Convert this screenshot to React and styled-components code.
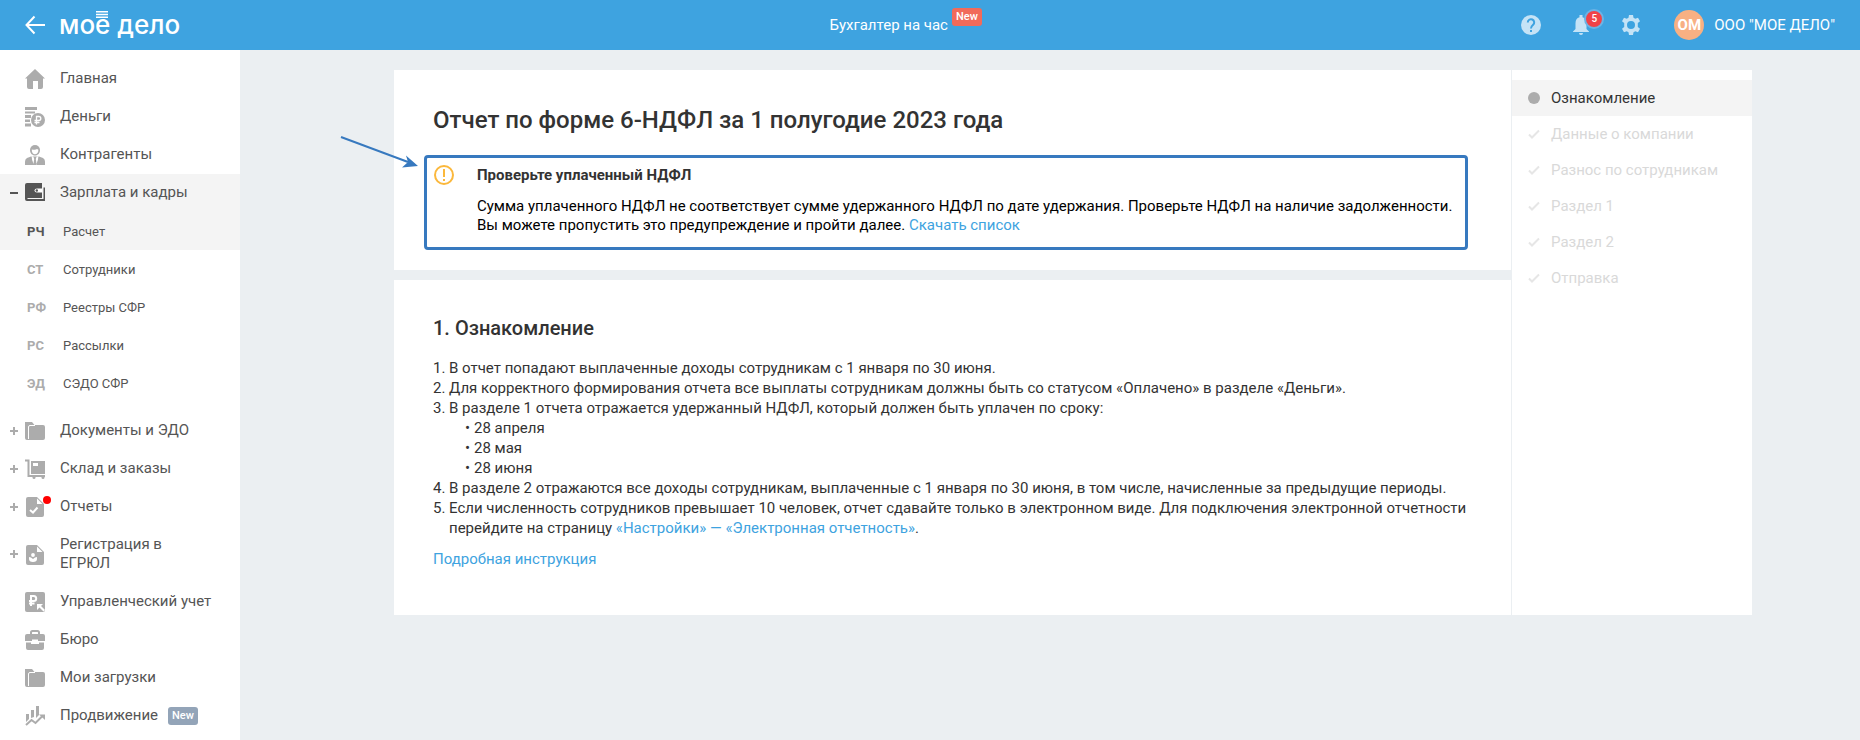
import React from 'react';
import styled, { createGlobalStyle, css } from 'styled-components';

const GlobalStyle = createGlobalStyle`
  * { box-sizing: border-box; }
  body {
    margin: 0;
    background: #ebeff2;
    color: #333;
    font: 400 15px/20px Roboto, "Open Sans", "Liberation Sans", sans-serif;
  }
  button { font: inherit; color: inherit; border: 0; padding: 0; background: none; cursor: pointer; }
  h1, h2, h3, p, ul, ol { margin: 0; padding: 0; font: inherit; }
  ul, ol { list-style: none; }
`;

const Page = styled.div`
  min-height: 100vh;
  display: grid;
  grid-template: 50px 1fr / 240px 1fr;
`;

const Header = styled.header`
  grid-column: 1 / -1;
  display: grid;
  grid-template-columns: 240px 1fr auto;
  align-items: center;
  padding-right: 25px;
  background: #3ea3e0;
  color: #fff;
`;

const Brand = styled.div`
  display: flex;
  align-items: center;
  gap: 14px;
  padding-left: 25px;
`;

const BackButton = styled.button`
  display: flex;
`;

const Logo = styled.a`
  display: flex;
  position: relative;
  color: #fff;
  text-decoration: none;
  white-space: nowrap;
  font: 500 26px/32px Inter, "Open Sans", sans-serif;
`;

const LogoBars = styled.svg`
  position: absolute;
  left: 37px;
  top: 2px;
`;

const HeaderNav = styled.nav`
  display: flex;
  justify-content: center;
  gap: 4px;
  padding-left: 50px;
`;

const HeaderLink = styled.a`
  color: #fff;
  text-decoration: none;
`;

const Tag = styled.span`
  height: 18px;
  padding: 0 4px;
  border-radius: 3px;
  background: ${p => p.$color};
  color: #fff;
  font: 500 11px/17px Roboto, sans-serif;
`;

const RaisedTag = styled(Tag)`
  align-self: flex-start;
  margin-top: -7px;
`;

const Tools = styled.div`
  display: flex;
  align-items: center;
  gap: 30px;
`;

const ToolButton = styled.button`
  position: relative;
  display: flex;
  color: #c5e3f6;
`;

const Counter = styled.span`
  position: absolute;
  left: 13px;
  top: -6px;
  width: 20px;
  height: 20px;
  border: 2px solid #6cb3e5;
  border-radius: 50%;
  background: #f04248;
  color: #fff;
  font: 500 10px/16px Roboto, sans-serif;
  text-align: center;
`;

const Account = styled.button`
  display: flex;
  align-items: center;
  gap: 10px;
  margin-left: 3px;
  color: #fff;
`;

const Avatar = styled.span`
  width: 30px;
  height: 30px;
  border-radius: 50%;
  background: #f8b083;
  font-weight: 700;
  line-height: 30px;
  text-align: center;
`;

const Sidebar = styled.nav`
  padding: 10px 0 6px;
  background: #fff;
  color: #555;
`;

const rowStyle = css`
  display: flex;
  align-items: center;
  width: 100%;
  min-height: 38px;
  color: inherit;
  text-decoration: none;
  background: ${p => (p.$active ? '#f4f4f4' : 'transparent')};
`;

const MenuRow = styled.a`
  ${rowStyle}
  padding: 9px 25px 10px 9px;
  line-height: 19px;
`;

const Toggle = styled.span`
  width: 16px;
  display: flex;
  color: ${p => (p.$active ? '#555' : '#acacac')};
`;

const IconBox = styled.span`
  position: relative;
  display: flex;
  height: 19px;
  margin-right: 15px;
  color: ${p => (p.$active ? '#555' : '#acacac')};
`;

const AlertDot = styled.span`
  position: absolute;
  left: 18px;
  top: -1px;
  width: 8px;
  height: 8px;
  border-radius: 50%;
  background: #f00;
`;

const MenuTag = styled(Tag)`
  margin-left: 10px;
`;

const SubMenu = styled.ul`
  margin-bottom: 10px;
`;

const SubRow = styled.a`
  ${rowStyle}
  padding: 2px 0 0 27px;
  font-size: 13px;
`;

const Code = styled.span`
  width: 36px;
  font-weight: 700;
  color: ${p => (p.$active ? '#555' : '#acacac')};
`;

const Main = styled.main`
  padding: 20px 0 20px 46px;
`;

const Report = styled.div`
  display: grid;
  grid-template-columns: 1fr 241px;
  width: calc(100% - 40px);
  max-width: 1358px;
  margin: 0 auto;
`;

const Panels = styled.div`
  display: flex;
  flex-direction: column;
  gap: 10px;
`;

const Panel = styled.section`
  position: relative;
  padding: ${p => p.$padding};
  background: #fff;
`;

const Title = styled.h1`
  margin-bottom: 20px;
  font-size: 24px;
  font-weight: 500;
  line-height: 30px;
`;

const Notice = styled.section`
  display: flex;
  gap: 23px;
  margin: 0 3px 0 -9px;
  padding: 7px 7px 12px;
  border: 3px solid #3779bf;
  border-radius: 4px;
  color: #000;
  line-height: 19px;
`;

const NoticeIcon = styled.svg`
  flex: none;
  color: #fbb83c;
`;

const NoticeTitle = styled.h3`
  margin-bottom: 12px;
  color: #333;
  font-weight: 700;
  line-height: 20px;
`;

const Pointer = styled.svg`
  position: absolute;
  left: -54px;
  top: 66px;
`;

const Link = styled.a`
  color: #3ea3e0;
  text-decoration: none;
`;

const Heading = styled.h2`
  margin-bottom: 17px;
  font-size: 20px;
  font-weight: 500;
  line-height: 25px;
`;

const Notes = styled.ol`
  margin-bottom: 11px;
`;

const Note = styled.li`
  display: flex;
`;

const Marker = styled.span`
  flex: 0 0 ${p => p.$width};
`;

const Dates = styled.ul`
  padding-left: 16px;
`;

const Steps = styled.ol`
  padding-top: 10px;
  border-left: 1px solid #ebeff2;
  background: #fff;
`;

const Step = styled.li`
  display: flex;
  align-items: center;
  gap: 11px;
  height: 36px;
  padding: 0 16px;
  background: ${p => (p.$active ? '#f4f4f4' : 'transparent')};
  color: ${p => (p.$active ? '#333' : '#d9d9d9')};
`;

const StepDot = styled.span`
  width: 12px;
  height: 12px;
  border-radius: 50%;
  background: #acacac;
`;

const Svg = ({ children, size = 20 }) => (
  <svg width={size} height={size} viewBox={`0 0 ${size} ${size}`} fill="currentColor" aria-hidden="true">
    {children}
  </svg>
);

const icons = {
  home: <path d="M10 0 20 9.500H18V18q0 2-2 2H13V12H8v8H4q-2 0-2-2V9.500H0Z" />,
  money: (
    <>
      <path d="M0 0h12v3H0zM0 4.500h10v2H0zM0 8h6v3H0zM0 12.500h5v2.500H0zM0 16.500h6v3H0z" />
      <circle cx="13" cy="13" r="7" />
      <path d="M11.500 17.500v-8h2.300a2 2 0 0 1 0 4H9.500M9.500 15.500h5" fill="none" stroke="#fff" strokeWidth="1.300" />
    </>
  ),
  person: (
    <>
      <path d="M10 0a5 5 0 0 1 5 5c0 3-2 5.500-5 5.500S5 8 5 5a5 5 0 0 1 5-5Z" />
      <path d="M6.800 4.500q4 .8 5.200-.5l1.400.7C13.400 7.500 12 9.200 10 9.200S6.600 7.500 6.800 4.500Z" fill="#fff" />
      <path d="M6 11.500 2 13q-2 1-2 3.500V20h20v-3.500q0-2.500-2-3.500l-4-1.500Z" />
      <path d="m6.500 11 3.500 1.500 3.500-1.500-1 9h-5Z" fill="#fff" />
      <path d="M8.500 12h3l-.7 2 .9 6H8.300l.9-6ZM6 11.500 8.800 20H5ZM14 11.500 11.200 20H15Z" />
    </>
  ),
  wallet: (
    <>
      <path d="M2 0h15v15H2.500v1H18.500V4.500H20V18H2q-2 0-2-2V2q0-2 2-2Z" />
      <path d="M17 5.500h-5q-2.500 0-2.500 2t2.500 2h5Z" fill="#fff" />
      <circle cx="11.800" cy="7.500" r="1.200" />
    </>
  ),
  folder: (
    <>
      <path d="M0 1h7l2.500 3H18q2 0 2 2v11q0 2-2 2H2q-2 0-2-2Z" />
      <path d="M3.500 18V6q0-1.500 1.500-1.500h5" fill="none" stroke="#fff" />
    </>
  ),
  cart: (
    <>
      <path d="M0 1.500h3.500V17H20" fill="none" stroke="currentColor" strokeWidth="2" />
      <path d="M6 2h14v13H6Z" />
      <path d="M8 4h5v3H8Z" fill="#fff" />
      <circle cx="9" cy="18.500" r="1.500" />
      <circle cx="18" cy="18.500" r="1.500" />
    </>
  ),
  report: (
    <>
      <path d="M3 0h9l7 7v11q0 2-2 2H3q-2 0-2-2V2q0-2 2-2Z" />
      <path d="M12 1.500V7h5.500Z" fill="#fff" />
      <path d="m5 13 3 2.500 4.500-5" fill="none" stroke="#fff" strokeWidth="2" />
    </>
  ),
  registry: (
    <>
      <path d="M3 0h9l7 7v11q0 2-2 2H3q-2 0-2-2V2q0-2 2-2Z" />
      <path d="M12 1.500V7h5.500Z" fill="#fff" />
      <circle cx="8" cy="10" r="1.900" fill="#fff" />
      <path d="M4 12q2 0 4 2 2-2 4-2v2q0 3-4 3t-4-3Z" fill="#fff" />
    </>
  ),
  ruble: (
    <>
      <rect width="20" height="20" rx="2" />
      <path d="M6 14V4h2.700a2.500 2.500 0 0 1 0 5H4M4 11.500h5.500" fill="none" stroke="#fff" strokeWidth="2" />
      <path d="M12 12h6l-2 2 4 4-1.500 1.500-4-4-2.500 2.500Z" fill="#fff" />
    </>
  ),
  briefcase: (
    <>
      <path d="M6 5V2.500Q6 1 7.500 1h5Q14 1 14 2.500V5" fill="none" stroke="currentColor" strokeWidth="2" />
      <path d="M2 4h16q2 0 2 2v5h-7V9.500H7V11H0V6q0-2 2-2ZM1 12.500h5V14h8v-1.500h5V18q0 2-2 2H3q-2 0-2-2Z" />
    </>
  ),
  growth: (
    <>
      <path d="M1 8h3v5l-3 3zM6 4h3v7l-3 1zM11 0h3v9l-3 3z" />
      <path d="m1 19 5.500-5 4 3 7-7" fill="none" stroke="currentColor" strokeWidth="2" />
      <path d="M14 8.500h6V14Z" />
    </>
  ),
};

const menu = [
  { icon: 'home', label: 'Главная' },
  { icon: 'money', label: 'Деньги' },
  { icon: 'person', label: 'Контрагенты' },
  {
    icon: 'wallet',
    label: 'Зарплата и кадры',
    active: true,
    toggle: 'minus',
    children: [
      { code: 'РЧ', label: 'Расчет', active: true },
      { code: 'СТ', label: 'Сотрудники' },
      { code: 'РФ', label: 'Реестры СФР' },
      { code: 'РС', label: 'Рассылки' },
      { code: 'ЭД', label: 'СЭДО СФР' },
    ],
  },
  { icon: 'folder', label: 'Документы и ЭДО', toggle: 'plus' },
  { icon: 'cart', label: 'Склад и заказы', toggle: 'plus' },
  { icon: 'report', label: 'Отчеты', toggle: 'plus', alert: true },
  { icon: 'registry', label: 'Регистрация в ЕГРЮЛ', toggle: 'plus' },
  { icon: 'ruble', label: 'Управленческий учет' },
  { icon: 'briefcase', label: 'Бюро' },
  { icon: 'folder', label: 'Мои загрузки' },
  { icon: 'growth', label: 'Продвижение', tag: 'New' },
];

const steps = ['Ознакомление', 'Данные о компании', 'Разнос по сотрудникам', 'Раздел 1', 'Раздел 2', 'Отправка'];

const notes = [
  'В отчет попадают выплаченные доходы сотрудникам с 1 января по 30 июня.',
  'Для корректного формирования отчета все выплаты сотрудникам должны быть со статусом «Оплачено» в разделе «Деньги».',
  <>
    В разделе 1 отчета отражается удержанный НДФЛ, который должен быть уплачен по сроку:
    <Dates>
      {['28 апреля', '28 мая', '28 июня'].map(d => (
        <Note key={d}>
          <Marker $width="9px">•</Marker>
          {d}
        </Note>
      ))}
    </Dates>
  </>,
  'В разделе 2 отражаются все доходы сотрудникам, выплаченные с 1 января по 30 июня, в том числе, начисленные за предыдущие периоды.',
  <>
    Если численность сотрудников превышает 10 человек, отчет сдавайте только в электронном виде. Для подключения
    электронной отчетности перейдите на страницу <Link href="#settings">«Настройки» — «Электронная отчетность»</Link>.
  </>,
];

function MenuItem({ item }) {
  return (
    <li>
      <MenuRow href="#" $active={item.active}>
        <Toggle $active={item.active}>
          {item.toggle && (
            <Svg size={10}>
              <path d={item.toggle === 'plus' ? 'M1 5h8M5 1v8' : 'M1 5h8'} stroke="currentColor" strokeWidth="2" />
            </Svg>
          )}
        </Toggle>
        <IconBox $active={item.active}>
          <Svg>{icons[item.icon]}</Svg>
          {item.alert && <AlertDot />}
        </IconBox>
        <span>{item.label}</span>
        {item.tag && <MenuTag $color="#93a4b8">{item.tag}</MenuTag>}
      </MenuRow>
      {item.children && (
        <SubMenu>
          {item.children.map(sub => (
            <li key={sub.code}>
              <SubRow href="#" $active={sub.active}>
                <Code $active={sub.active}>{sub.code}</Code>
                {sub.label}
              </SubRow>
            </li>
          ))}
        </SubMenu>
      )}
    </li>
  );
}

export default function App() {
  return (
    <Page>
      <GlobalStyle />
      <Header>
        <Brand>
          <BackButton aria-label="Назад">
            <Svg>
              <path d="M20 10H1.500M9.500 1.500 1.500 10l8 8.500" fill="none" stroke="currentColor" strokeWidth="2" />
            </Svg>
          </BackButton>
          <Logo href="#">
            мое дело
            <LogoBars width="12" height="7" viewBox="0 0 12 7" aria-hidden="true">
              <path d="M0 .7h12M0 3.500h12M0 6.300h12" stroke="#fff" strokeWidth="1.400" />
            </LogoBars>
          </Logo>
        </Brand>
        <HeaderNav>
          <HeaderLink href="#">Бухгалтер на час</HeaderLink>
          <RaisedTag $color="#f16a5a">New</RaisedTag>
        </HeaderNav>
        <Tools>
          <ToolButton aria-label="Помощь">
            <Svg>
              <circle cx="10" cy="10" r="10" />
              <path d="M6.800 7.500a3.200 3.200 0 1 1 5.200 2.400c-1.200 1-2 1.600-2 3.600" fill="none" stroke="#3ea3e0" strokeWidth="2" />
              <path d="M9 15h2v2H9z" fill="#3ea3e0" />
            </Svg>
          </ToolButton>
          <ToolButton aria-label="Уведомления">
            <Svg>
              <path d="M8.500 0h3v2.200q4 1.200 4 6V14l2.500 2.500V17H2v-.5L4.500 14V8.200q0-4.800 4-6ZM8 18h4q0 2-2 2t-2-2Z" />
            </Svg>
            <Counter>5</Counter>
          </ToolButton>
          <ToolButton aria-label="Настройки">
            <Svg>
              <path
                fillRule="evenodd"
                d="M8 0h4l.5 2.800 1.800 1 2.700-1 2 3.400-2.200 1.900v3.800l2.200 1.900-2 3.400-2.700-1-1.800 1L12 20H8l-.5-2.800-1.800-1-2.700 1-2-3.400 2.200-1.900V8.100L1 6.200l2-3.400 2.700 1 1.800-1ZM10 6a4 4 0 1 0 0 8 4 4 0 0 0 0-8Z"
              />
            </Svg>
          </ToolButton>
          <Account>
            <Avatar>ОМ</Avatar>
            ООО "МОЕ ДЕЛО"
          </Account>
        </Tools>
      </Header>

      <Sidebar>
        <ul>
          {menu.map(item => (
            <MenuItem key={item.label} item={item} />
          ))}
        </ul>
      </Sidebar>

      <Main>
        <Report>
          <Panels>
            <Panel $padding="35px 40px 20px 39px">
              <Title>Отчет по форме 6-НДФЛ за 1 полугодие 2023 года</Title>
              <Notice>
                <NoticeIcon width="20" height="20" viewBox="0 0 20 20" fill="currentColor" aria-hidden="true">
                  <circle cx="10" cy="10" r="9" fill="none" stroke="currentColor" strokeWidth="2" />
                  <path d="M9 4h2v8H9zM9 14h2v2H9z" />
                </NoticeIcon>
                <div>
                  <NoticeTitle>Проверьте уплаченный НДФЛ</NoticeTitle>
                  <p>
                    Сумма уплаченного НДФЛ не соответствует сумме удержанного НДФЛ по дате удержания. Проверьте НДФЛ на
                    наличие задолженности.
                    <br />
                    Вы можете пропустить это предупреждение и пройти далее. <Link href="#list">Скачать список</Link>
                  </p>
                </div>
              </Notice>
              <Pointer width="80" height="36" viewBox="0 0 80 36" aria-hidden="true">
                <path d="M1 1 68 26" stroke="#3779bf" strokeWidth="2" />
                <path d="m78 30-16 1.500 6-5.500-2-6.500Z" fill="#3779bf" />
              </Pointer>
            </Panel>
            <Panel $padding="36px 40px 46px 39px">
              <Heading>1. Ознакомление</Heading>
              <Notes>
                {notes.map((note, i) => (
                  <Note key={i}>
                    <Marker $width="16px">{i + 1}.</Marker>
                    <div>{note}</div>
                  </Note>
                ))}
              </Notes>
              <Link href="#guide">Подробная инструкция</Link>
            </Panel>
          </Panels>
          <Steps>
            {steps.map((step, i) => (
              <Step key={step} $active={i === 0}>
                {i === 0 ? (
                  <StepDot />
                ) : (
                  <Svg size={12}>
                    <path d="m1 6.500 3 3L11 2.500" fill="none" stroke="#e6e6e6" strokeWidth="2" />
                  </Svg>
                )}
                {step}
              </Step>
            ))}
          </Steps>
        </Report>
      </Main>
    </Page>
  );
}
